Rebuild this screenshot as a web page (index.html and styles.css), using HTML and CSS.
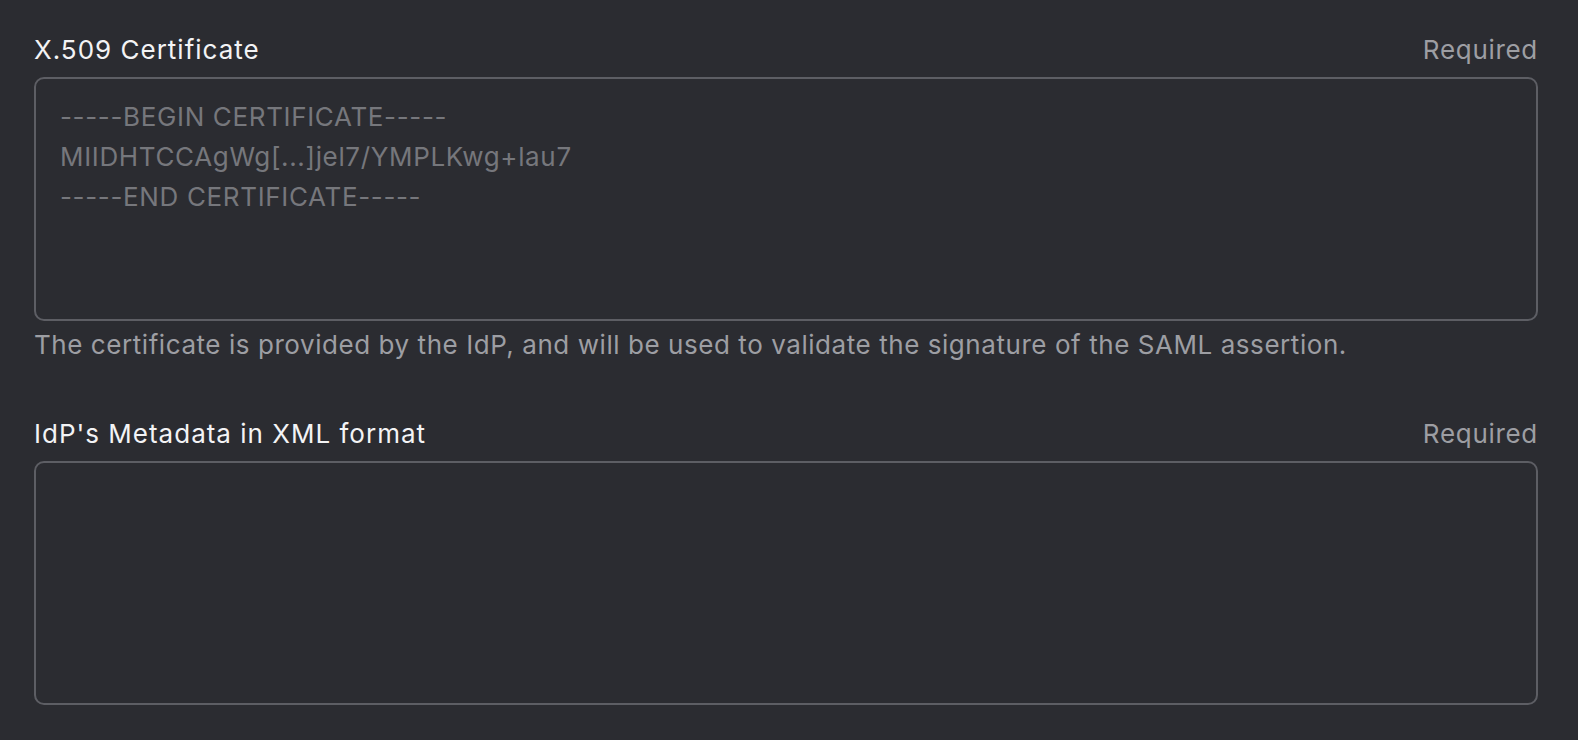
FILE: index.html
```html
<!DOCTYPE html>
<html lang="en">
<head>
<meta charset="utf-8">
<title>SAML settings</title>
<link rel="stylesheet" href="styles.css">
</head>
<body>
<form class="form">
  <div class="field">
    <div class="field-head">
      <label class="field-label" for="cert">X.509 Certificate</label>
      <span class="field-req">Required</span>
    </div>
    <textarea id="cert" class="field-input" placeholder="-----BEGIN CERTIFICATE-----&#10;MIIDHTCCAgWg[...]jel7/YMPLKwg+lau7&#10;-----END CERTIFICATE-----"></textarea>
    <p class="field-help">The certificate is provided by the IdP, and will be used to validate the signature of the SAML assertion.</p>
  </div>
  <div class="field">
    <div class="field-head">
      <label class="field-label" for="meta">IdP's Metadata in XML format</label>
      <span class="field-req">Required</span>
    </div>
    <textarea id="meta" class="field-input"></textarea>
  </div>
</form>
</body>
</html>
```

FILE: styles.css
```css
html, body {
  margin: 0;
  padding: 0;
  background: #2b2c31;
}
body {
  font-family: Inter, "Noto Sans", "Liberation Sans", sans-serif;
  color: #f1f1f3;
}
.form {
  display: flex;
  flex-direction: column;
  gap: 57px;
  padding: 34px 40px 0 34px;
}
.field {
  display: flex;
  flex-direction: column;
}
.field-head {
  display: flex;
  justify-content: space-between;
  align-items: baseline;
  height: 32px;
  margin-bottom: 11px;
}
.field-label {
  font-size: 26px;
  line-height: 32px;
  letter-spacing: 1px;
  color: #f3f3f5;
}
.field-req {
  font-size: 26px;
  line-height: 32px;
  letter-spacing: 0.7px;
  color: #9d9ea3;
}
.field-input {
  display: block;
  box-sizing: border-box;
  width: 100%;
  height: 244px;
  margin: 0;
  padding: 18px 24px;
  background: #2b2c31;
  border: 2px solid #5d5e64;
  border-radius: 10px;
  resize: none;
  outline: none;
  font-family: Inter, "Noto Sans", "Liberation Sans", sans-serif;
  font-size: 26px;
  line-height: 40px;
  letter-spacing: 0.65px;
  color: #d0d0d4;
  overflow: hidden;
}
.field-input::placeholder {
  color: #76777c;
}
.field-help {
  margin: 8px 0 0;
  font-size: 26px;
  line-height: 32px;
  letter-spacing: 0.56px;
  color: #9d9ea3;
}
```
